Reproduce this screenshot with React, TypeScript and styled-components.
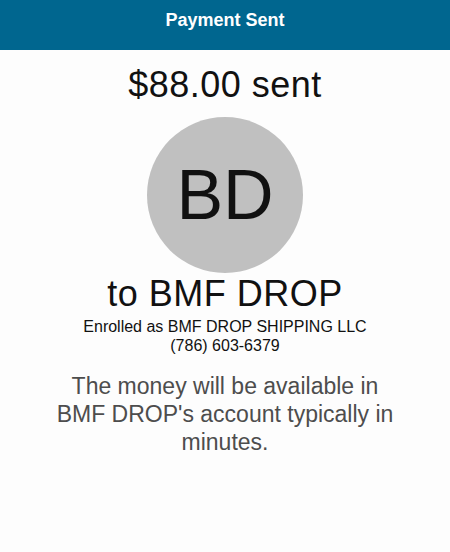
import React from 'react';
import styled, { createGlobalStyle } from 'styled-components';

const GlobalStyle = createGlobalStyle`
  html, body {
    margin: 0;
    padding: 0;
    background: #fdfdfd;
  }
  body {
    font-family: "Liberation Sans", Arial, sans-serif;
  }
`;

const Page = styled.div`
  width: 450px;
  min-height: 552px;
  background: #fdfdfd;
  display: flex;
  flex-direction: column;
  align-items: center;
`;

const Header = styled.header`
  width: 100%;
  height: 50px;
  box-sizing: border-box;
  padding-top: 10px;
  background: #00668f;
  color: #ffffff;
  text-align: center;
  font-size: 18px;
  line-height: 20px;
  font-weight: 700;
`;

const Amount = styled.h1`
  margin: 14px 0 0;
  font-size: 36px;
  line-height: 42px;
  letter-spacing: 0.5px;
  font-weight: 400;
  color: #111111;
`;

const Avatar = styled.div`
  margin-top: 11px;
  width: 156px;
  height: 156px;
  border-radius: 50%;
  background: #c0c0c0;
  display: flex;
  align-items: center;
  justify-content: center;
  font-size: 70px;
  line-height: 1;
  color: #111111;
`;

const Recipient = styled.h2`
  margin: 1px 0 0;
  font-size: 36px;
  line-height: 40px;
  letter-spacing: 0.5px;
  font-weight: 400;
  color: #111111;
`;

const Details = styled.div`
  margin-top: 3px;
  display: flex;
  flex-direction: column;
  align-items: center;
`;

const Detail = styled.p`
  margin: 0;
  font-size: 16px;
  line-height: 19px;
  color: #111111;
  text-align: center;
`;

const Note = styled.p`
  margin: 17px 0 0;
  max-width: 350px;
  font-size: 23px;
  line-height: 28px;
  color: #4d4d4d;
  text-align: center;
`;

export default function App() {
  return (
    <>
      <GlobalStyle />
      <Page>
        <Header>Payment Sent</Header>
        <Amount>$88.00 sent</Amount>
        <Avatar>BD</Avatar>
        <Recipient>to BMF DROP</Recipient>
        <Details>
          <Detail>Enrolled as BMF DROP SHIPPING LLC</Detail>
          <Detail>(786) 603-6379</Detail>
        </Details>
        <Note>The money will be available in BMF DROP's account typically in minutes.</Note>
      </Page>
    </>
  );
}
